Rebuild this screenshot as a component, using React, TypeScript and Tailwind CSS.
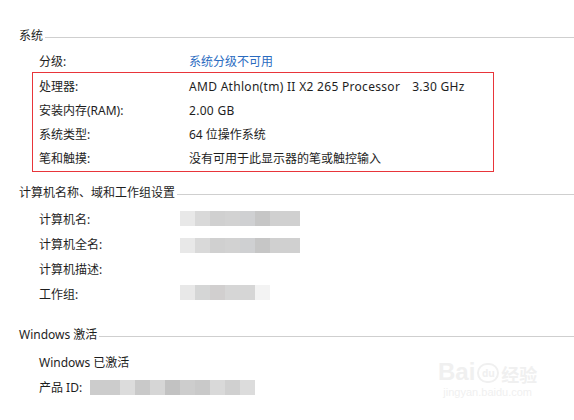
const font = {
  fontFamily: '"Noto Sans", "Noto Sans CJK SC", sans-serif',
};

const nameCells = ['#e8e8e8', '#d9d9d9', '#d0d0d0', '#d2d2d2', '#cfd0d2', '#c6c6c6', '#d0d0d0', '#d0d0d0'];
const groupCells = ['#e8e8e8', '#d5d6d6', '#d1cfcf', '#d6d6d6', '#d6d6d6', '#f3f3f3'];
const idCells = ['#cccccc', '#cccccc', '#dcdcdc', '#c9c9c9', '#d6d6d6', '#c2c2c2', '#cdcdcd', '#c9c9c9', '#d9d9d9', '#d0d0d0', '#dcdcdc'];

function Blur({ cells }: { cells: string[] }) {
  return (
    <div className="flex h-[15px]">
      {cells.map((c, i) => (
        <div key={i} className="w-[15px] h-full" style={{ backgroundColor: c }} />
      ))}
    </div>
  );
}

function SectionHeader({ title }: { title: string }) {
  return (
    <div className="flex items-center h-5 pl-[19px]">
      <span className="text-[12px] text-[#1e1e1e] whitespace-nowrap">{title}</span>
      <div className="flex-1 h-px bg-[#cfcfcf] ml-[2px] mt-[2px]" />
    </div>
  );
}

function Row({ label, children, h = 'h-6' }: { label: string; children?: React.ReactNode; h?: string }) {
  return (
    <div className={`flex items-center ${h}`}>
      <div className="w-[150px] text-[12px] text-[#1e1e1e] whitespace-nowrap">{label}</div>
      <div className="text-[12px] text-[#1e1e1e] whitespace-nowrap">{children}</div>
    </div>
  );
}

export default function App() {
  return (
    <div className="relative w-[574px] h-[420px] bg-white overflow-hidden" style={font}>
      <div className="pt-[26px]">
        <SectionHeader title="系统" />
        <div className="pl-[39px] mt-1">
          <Row label="分级:">
            <span className="text-[#2a6bbf]">系统分级不可用</span>
          </Row>
        </div>
        <div className="ml-[32px] w-[462px] border border-[#e8353a] pl-[6px] pt-[2px] -mt-[2px]">
          <Row label="处理器:">
            <span className="tracking-[0.3px]">AMD Athlon(tm) II X2 265 Processor</span>
            <span className="ml-[12px] tracking-[0.3px]">3.30 GHz</span>
          </Row>
          <Row label="安装内存(RAM):">
            <span className="tracking-[0.3px]">2.00 GB</span>
          </Row>
          <Row label="系统类型:">64 位操作系统</Row>
          <Row label="笔和触摸:">没有可用于此显示器的笔或触控输入</Row>
        </div>

        <div className="mt-[11px]">
          <SectionHeader title="计算机名称、域和工作组设置" />
        </div>
        <div className="pl-[39px] mt-[4px]">
          <Row label="计算机名:" h="h-[25px]">
            <div className="-ml-[9px] -mt-[3px]">
              <Blur cells={nameCells} />
            </div>
          </Row>
          <Row label="计算机全名:" h="h-[25px]">
            <div className="-ml-[9px] mt-[2px]">
              <Blur cells={nameCells} />
            </div>
          </Row>
          <Row label="计算机描述:" h="h-[25px]" />
          <Row label="工作组:" h="h-[25px]">
            <div className="-ml-[9px] -mt-[4px]">
              <Blur cells={groupCells} />
            </div>
          </Row>
        </div>

        <div className="mt-[18px]">
          <SectionHeader title="Windows 激活" />
        </div>
        <div className="pl-[39px] mt-[5px]">
          <div className="flex items-center h-[25px] text-[12px] text-[#1e1e1e]">Windows 已激活</div>
          <div className="flex items-center h-[25px] text-[12px] text-[#1e1e1e]">
            <span>产品 ID:</span>
            <div className="ml-[8px]">
              <Blur cells={idCells} />
            </div>
          </div>
        </div>
      </div>

      <div className="absolute left-[438px] top-[360px] flex flex-col items-center text-[#f0f0f0] select-none">
        <div className="flex items-end">
          <span className="text-[24px] font-bold leading-none" style={{ fontFamily: '"Liberation Sans", sans-serif' }}>Bai</span>
          <span className="mx-[2px] mb-[1px] flex items-center justify-center w-[22px] h-[20px] rounded-full border-2 border-[#f0f0f0] text-[10px] font-bold leading-none">du</span>
          <span className="text-[18px] font-bold leading-none">经验</span>
        </div>
        <span className="text-[11px] leading-none mt-[3px]" style={{ fontFamily: '"Liberation Sans", sans-serif' }}>jingyan.baidu.com</span>
      </div>
    </div>
  );
}
